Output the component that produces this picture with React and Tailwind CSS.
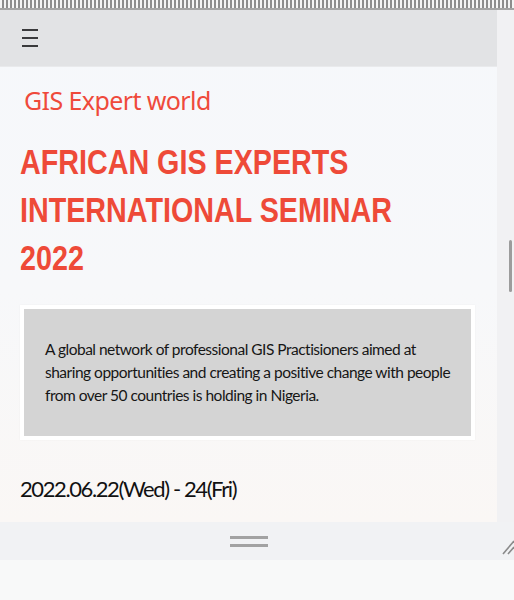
import React from 'react';

const Ruler = () => (
  <div className="h-[10px] w-full bg-[#e9e9ea]">
    <div className="h-[8px] w-full bg-[repeating-linear-gradient(90deg,#f4f4f4_0px,#f4f4f4_2px,#8c8c8c_2px,#8c8c8c_4px)]" />
    <div className="h-[2px] w-full bg-[#a4a4a4]" />
  </div>
);

const ResizeGrip = () => (
  <svg width="12" height="16" viewBox="0 0 12 16" className="absolute right-0 top-[17px]">
    <line x1="1" y1="15" x2="12" y2="2" stroke="#8a8a8a" strokeWidth="1.6" />
    <line x1="6" y1="15" x2="12" y2="8" stroke="#8a8a8a" strokeWidth="1.6" />
  </svg>
);

export default function App() {
  return (
    <div className="w-[514px] h-[600px] overflow-hidden bg-[#f8f9f9] flex flex-col">
      <Ruler />

      <div className="flex h-[512px]">
        {/* Page */}
        <div className="w-[497px] flex flex-col bg-[linear-gradient(180deg,#f6f8fb_0%,#f7f8fa_55%,#faf7f5_100%)]">
          {/* Header */}
          <div className="h-[57px] bg-[#e2e3e5] border-b border-[#e9eaec] flex items-center pl-[22px] shrink-0">
            <div className="flex flex-col gap-[6px] w-[16px]">
              <span className="block h-[2px] bg-[#3a3a3c]" />
              <span className="block h-[2px] bg-[#3a3a3c]" />
              <span className="block h-[2px] bg-[#3a3a3c]" />
            </div>
          </div>

          {/* Hero */}
          <div className="flex flex-col pt-[13px] px-[20px]">
            <p className="pl-[4px] text-[25px] leading-[40px] text-[#ef4a3b] font-['Noto_Sans',sans-serif] tracking-[-0.6px]">
              GIS Expert world
            </p>
            <h1 className="mt-[18px] w-[560px] origin-left scale-x-[0.82] text-[35px] leading-[48px] font-bold text-[#ee4a38] font-['Liberation_Sans',sans-serif]">
              AFRICAN GIS EXPERTS
              <br />
              INTERNATIONAL SEMINAR
              <br />
              2022
            </h1>

            <div className="mt-[23px] w-[455px] bg-white p-[4px] shadow-[0_0_2px_rgba(0,0,0,0.04)]">
              <div className="bg-[#d4d4d4] pl-[21px] pr-[8px] py-[29px]">
                <p className="text-[15.5px] leading-[23px] text-[#161616] font-['Lato',sans-serif] tracking-[-0.5px]">
                  A global network of professional GIS Practisioners aimed at sharing opportunities and creating a positive change with people from over 50 countries is holding in Nigeria.
                </p>
              </div>
            </div>

            <p className="mt-[33px] text-[22px] leading-[32px] text-[#111] font-['Lato',sans-serif] tracking-[-1.4px]">
              2022.06.22(Wed) - 24(Fri)
            </p>
          </div>
        </div>

        {/* Scrollbar */}
        <div className="w-[17px] bg-[#f1f1f3] relative">
          <div className="absolute left-[12px] top-[230px] w-[3px] h-[52px] rounded-full bg-[#9c9c9c]" />
        </div>
      </div>

      {/* Bottom handle bar */}
      <div className="h-[38px] bg-[#f1f2f4] relative flex shrink-0">
        <div className="w-[497px] flex items-center justify-center">
          <div className="flex flex-col gap-[5px] w-[38px]">
            <span className="block h-[3px] bg-[#a2a2a2]" />
            <span className="block h-[3px] bg-[#a2a2a2]" />
          </div>
        </div>
        <ResizeGrip />
      </div>

      <div className="flex-1 bg-[#f8f9f9]" />
    </div>
  );
}
